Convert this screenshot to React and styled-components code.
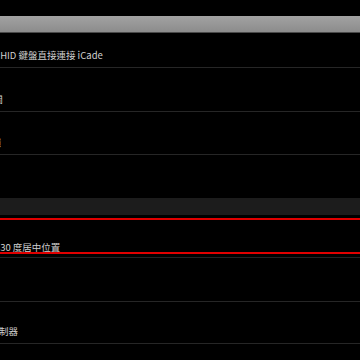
import React from "react";
import styled, { createGlobalStyle } from "styled-components";

const GlobalStyle = createGlobalStyle`
  html, body {
    margin: 0;
    padding: 0;
    background: #000;
  }
  body {
    font-family: "Noto Sans CJK TC", "Noto Sans", sans-serif;
    overflow: hidden;
  }
`;

const prefs = [
  { title: "藍牙", summary: "啟用藍牙模式 HID 鍵盤直接連接 iCade", h: 34 },
  { title: "連發", summary: "AB 鍵連發開關", h: 43 },
  { title: "震動", summary: "XY 鍵震動回饋", h: 42 },
  { title: "外觀", summary: "", h: 43, last: true },
];

const prefs2 = [
  { title: "方向", summary: "", h: 43 },
  { title: "裝置", summary: "連接 iCade 控制器", h: 41 },
  { title: "說明", summary: "", h: 40 },
];

function App() {
  return (
    <>
      <GlobalStyle />
      <Screen>
        <Item $h={16} $last />
        <Category />
        {prefs.map((p) => (
          <Item key={p.title} $h={p.h} $last={p.last}>
            <Texts>
              <Title>{p.title}</Title>
              <Summary>{p.summary}</Summary>
            </Texts>
          </Item>
        ))}
        <SubCategory />
        <FocusWrap>
          <FocusRow>
            <Texts>
              <Title>搖桿</Title>
              <Summary>搖桿預設角度 30 度居中位置</Summary>
            </Texts>
          </FocusRow>
        </FocusWrap>
        {prefs2.map((p) => (
          <Item key={p.title} $h={p.h}>
            <Texts>
              <Title>{p.title}</Title>
              <Summary>{p.summary}</Summary>
            </Texts>
          </Item>
        ))}
      </Screen>
    </>
  );
}

export default App;

const Screen = styled.div`
  width: 360px;
  height: 360px;
  overflow: hidden;
  background: #000;
  display: flex;
  flex-direction: column;
`;

const Category = styled.div`
  flex: none;
  height: 16px;
  background: linear-gradient(#a2a2a2, #8c8c8c);
  border-bottom: 1px solid #4a4a4a;
`;

const SubCategory = styled.div`
  flex: none;
  height: 17px;
  background: #1c1c1c;
`;

const Item = styled.div`
  flex: none;
  box-sizing: border-box;
  height: ${(p) => p.$h + (p.$last ? 0 : 1)}px;
  display: flex;
  flex-direction: column;
  justify-content: flex-end;
  padding-bottom: 7px;
  border-bottom: ${(p) => (p.$last ? "none" : "1px solid #262626")};
`;

const FocusWrap = styled.div`
  flex: none;
  padding: 3px 0;
  border-bottom: 1px solid #232323;
`;

const FocusRow = styled.div`
  height: 32px;
  display: flex;
  flex-direction: column;
  justify-content: flex-end;
  border-top: 2px solid #e00000;
  border-bottom: 2px solid #e00000;
`;

const Texts = styled.div`
  margin-left: -59px;
  white-space: nowrap;
`;

const Title = styled.div`
  font-size: 12px;
  line-height: 14px;
  margin-bottom: 3px;
  color: #fff;
`;

const Summary = styled.div`
  font-size: 9.5px;
  line-height: 10px;
  height: 10px;
  color: #cfcfcf;
`;
